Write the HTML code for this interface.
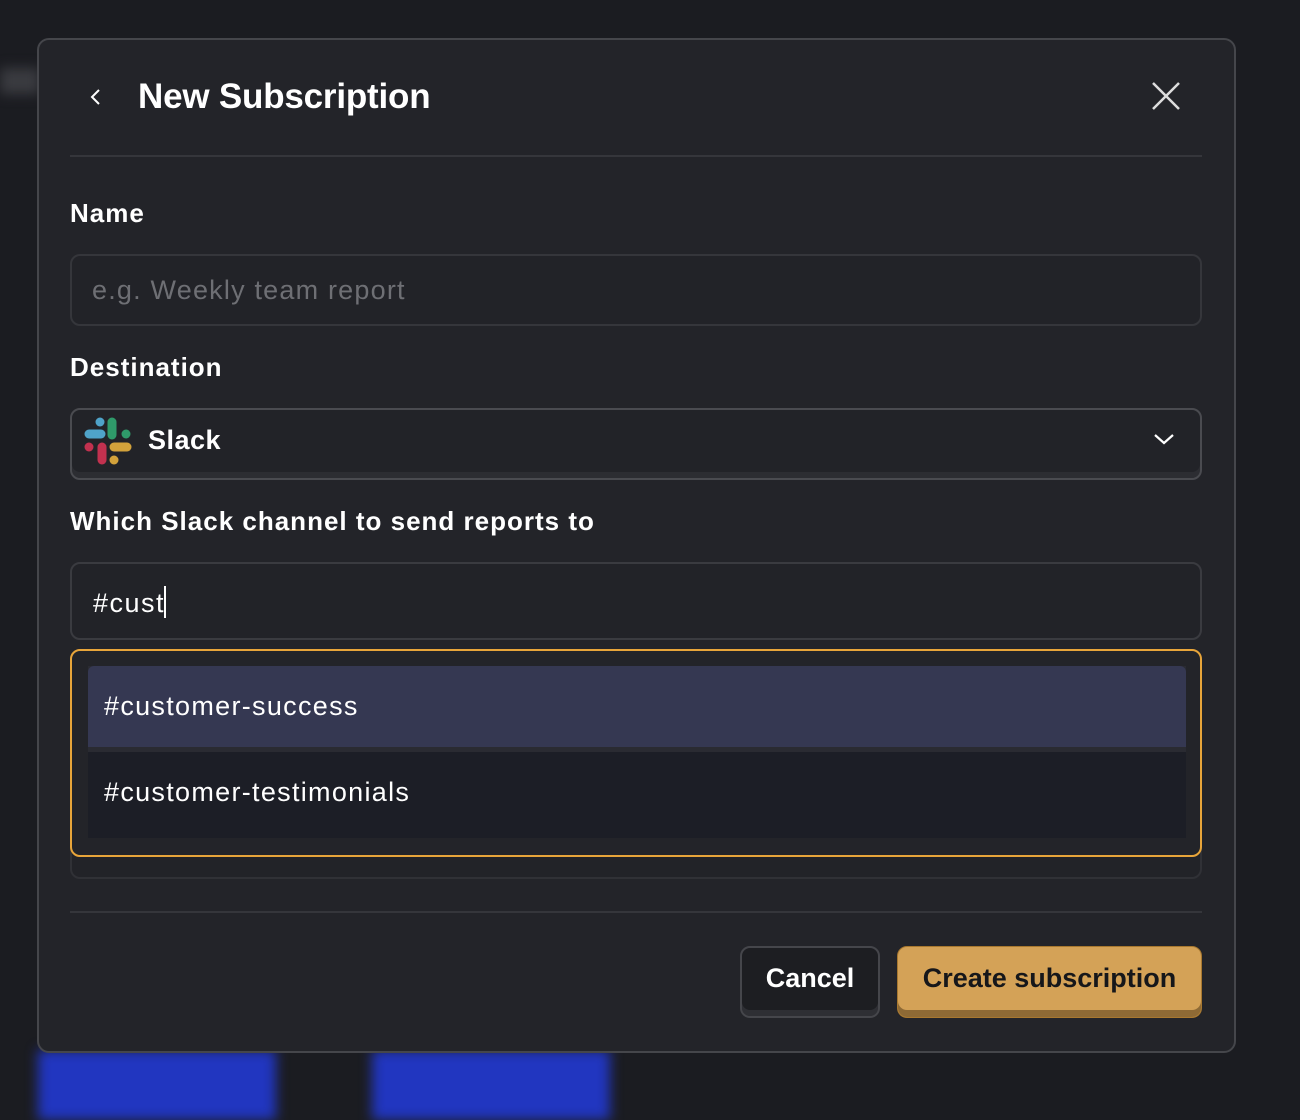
<!DOCTYPE html>
<html><head><style>
*{box-sizing:border-box;margin:0;padding:0}
body{width:1300px;height:1114px;background:#1b1c21;font-family:"Liberation Sans",sans-serif;position:relative;overflow:hidden;color:#fff}
.abs{position:absolute}
.blue{background:#2136c0;filter:blur(6px)}
.modal{left:37px;top:38px;width:1199px;height:1015px;background:#232429;border:2px solid #45464b;border-radius:12px}
.lbl{font-weight:bold;font-size:26px;left:70px;letter-spacing:1px}
.inp{left:70px;width:1132px;border:2px solid #35363b;border-radius:10px;background:#222328}
.hr{left:70px;width:1132px;height:2px;background:#35363b}
</style></head><body>
<div class="abs blue" style="left:38px;top:1050px;width:238px;height:70px"></div>
<div class="abs blue" style="left:372px;top:1050px;width:238px;height:70px"></div>
<div class="abs" style="left:0;top:68px;width:40px;height:26px;background:#3a3b40;filter:blur(6px)"></div>
<div class="abs modal"></div>
<svg class="abs" style="left:88px;top:88px" width="16" height="18" viewBox="0 0 16 18"><path d="M11 2 L4 9 L11 16" stroke="#fff" stroke-width="2" fill="none"/></svg>
<div class="abs" style="left:138px;top:77px;font-size:35px;font-weight:bold;letter-spacing:-0.2px">New Subscription</div>
<svg class="abs" style="left:1150px;top:80px" width="32" height="32" viewBox="0 0 32 32"><path d="M3 3 L29 29 M29 3 L3 29" stroke="#ddd" stroke-width="2.5"/></svg>
<div class="abs hr" style="top:155px"></div>
<div class="abs lbl" style="top:198px">Name</div>
<div class="abs inp" style="top:254px;height:72px"></div>
<div class="abs" style="left:92px;top:275px;font-size:27px;color:#6e6f74;letter-spacing:1.2px">e.g. Weekly team report</div>
<div class="abs lbl" style="top:352px">Destination</div>
<div class="abs inp" style="top:408px;height:72px;border-color:#4a4b50;box-shadow:inset 0 -6px 0 #2c2d32"></div>
<svg class="abs" style="left:84px;top:417px" width="48" height="48" viewBox="0 0 48 48">
<g stroke-linecap="round" stroke-width="9" fill="none">
<line x1="5" y1="17" x2="17" y2="17" stroke="#4fa3c9"/><line x1="16" y1="5" x2="16" y2="5" stroke="#4fa3c9"/>
<line x1="28" y1="5" x2="28" y2="18" stroke="#2f9a6a"/><line x1="42" y1="17" x2="42" y2="17" stroke="#2f9a6a"/>
<line x1="5" y1="30" x2="5" y2="30" stroke="#c2314f"/><line x1="18" y1="30" x2="18" y2="43" stroke="#c2314f"/>
<line x1="30" y1="30" x2="43" y2="30" stroke="#d3a23b"/><line x1="30" y1="43" x2="30" y2="43" stroke="#d3a23b"/>
</g></svg>
<div class="abs" style="left:148px;top:425px;font-size:27px;font-weight:bold;letter-spacing:0.5px">Slack</div>
<svg class="abs" style="left:1153px;top:432px" width="22" height="14" viewBox="0 0 22 14"><path d="M2 3 L11 11 L20 3" stroke="#fff" stroke-width="2.2" fill="none"/></svg>
<div class="abs lbl" style="top:506px">Which Slack channel to send reports to</div>
<div class="abs inp" style="top:562px;height:78px;border-color:#3a3b40"></div>
<div class="abs" style="left:93px;top:586px;font-size:27px;letter-spacing:1.5px">#cust<span style="display:inline-block;width:2px;height:32px;background:#fff;vertical-align:-6px;margin-left:-1px"></span></div>
<div class="abs inp" style="top:700px;height:179px;border-color:#303136"></div>
<div class="abs" style="left:70px;top:649px;width:1132px;height:208px;border:2px solid #e8a53a;border-radius:10px;background:#232429;overflow:hidden">
<div class="abs" style="left:16px;top:15px;width:1098px;height:172px;background:#2a2b32"></div>
<div class="abs" style="left:16px;top:15px;width:1098px;height:81px;background:#353852;border-radius:6px 6px 0 0"></div>
<div class="abs" style="left:16px;top:101px;width:1098px;height:86px;background:#1c1e26"></div>
<div class="abs" style="left:32px;top:40px;font-size:27px;letter-spacing:1.3px">#customer-success</div>
<div class="abs" style="left:32px;top:126px;font-size:27px;letter-spacing:1.3px">#customer-testimonials</div>
</div>
<div class="abs hr" style="top:911px"></div>
<div class="abs" style="left:740px;top:946px;width:140px;height:72px;border:2px solid #45464b;border-radius:10px;background:#1d1e22;box-shadow:inset 0 -6px 0 #2e2f34"></div>
<div class="abs" style="left:740px;top:963px;width:140px;text-align:center;font-size:27px;font-weight:bold">Cancel</div>
<div class="abs" style="left:897px;top:946px;width:305px;height:72px;border:1px solid #a8782f;border-radius:10px;background:#d4a257;box-shadow:inset 0 -7px 0 #8e6a35"></div>
<div class="abs" style="left:897px;top:963px;width:305px;text-align:center;font-size:27px;font-weight:bold;color:#16171a">Create subscription</div>
</body></html>
